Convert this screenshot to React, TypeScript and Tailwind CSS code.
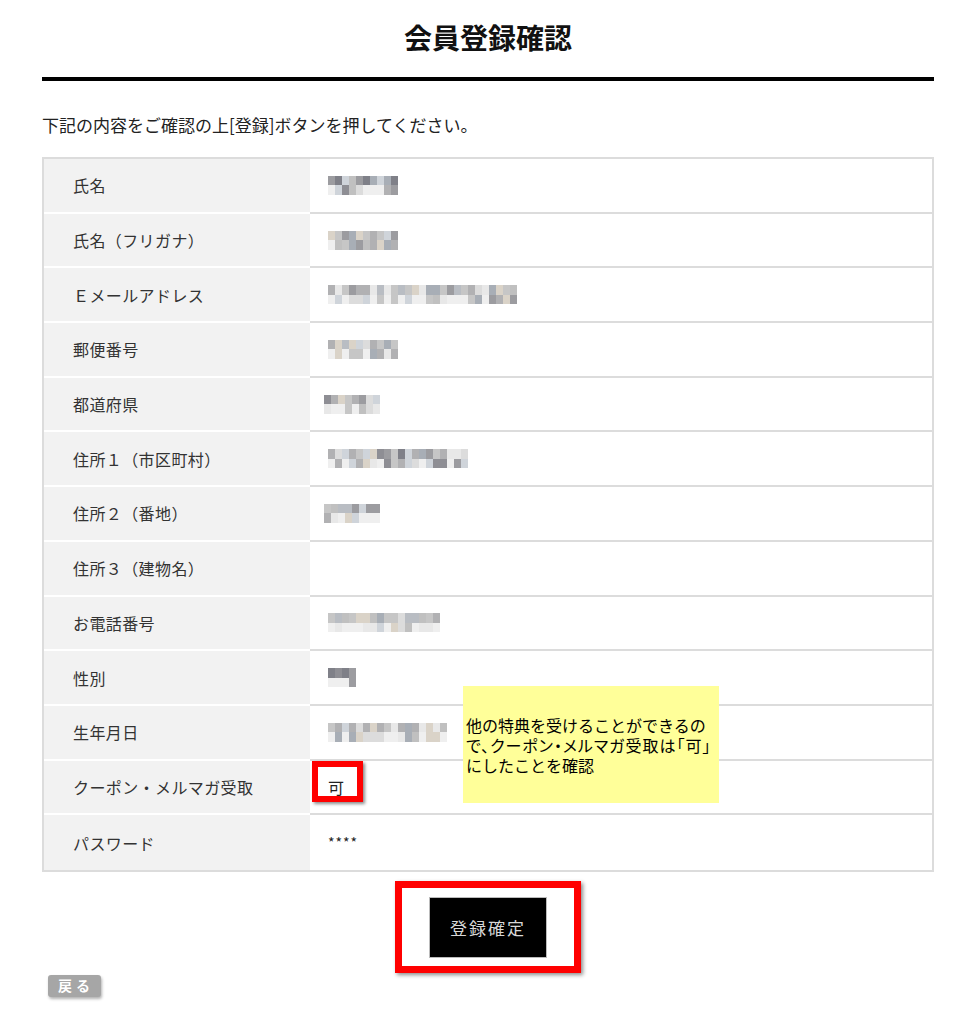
import React from "react";

const PALETTE = [
  "bg-[#dcdcdc]",
  "bg-[#c6c6c6]",
  "bg-[#b1b1b3]",
  "bg-[#9c9ca0]",
  "bg-[#e8e8e8]",
  "bg-[#cfd4da]",
  "bg-[#a8aeb6]",
  "bg-[#dad3c8]",
  "bg-[#8e8e94]",
  "bg-[#c0c0c0]",
  "bg-[#efefef]",
  "bg-[#b9bdc3]",
  "bg-[#f4f4f4]",
  "bg-[#7f8088]",
];

function Mosaic({ cells, seed, light }: { cells: number; seed: number; light?: boolean }) {
  const rows = [0, 1];
  let s = seed * 9301 + 49297;
  const next = () => {
    s = (s * 9301 + 49297) % 233280;
    return s / 233280;
  };
  return (
    <div className="flex flex-col">
      {rows.map((r) => (
        <div key={r} className="flex">
          {Array.from({ length: cells }).map((_, i) => {
            const v = next();
            let idx = Math.floor(v * PALETTE.length);
            if (light && (idx === 8 || idx === 13)) idx = 1;
            if (r === 0 && (idx === 10 || idx === 12)) idx = 2;
            if (r === 1 && v > 0.7) idx = 10;
            return <div key={i} className={`w-[7px] h-[9.5px] ${PALETTE[idx]}`} />;
          })}
        </div>
      ))}
    </div>
  );
}

type Row = { label: string; value: React.ReactNode };

export default function App() {
  const rows: Row[] = [
    { label: "氏名", value: <Mosaic cells={10} seed={3} /> },
    { label: "氏名（フリガナ）", value: <Mosaic cells={10} seed={7} light /> },
    { label: "Ｅメールアドレス", value: <Mosaic cells={27} seed={11} light /> },
    { label: "郵便番号", value: <Mosaic cells={10} seed={5} light /> },
    { label: "都道府県", value: <div className="-ml-[4px]"><Mosaic cells={8} seed={13} /></div> },
    { label: "住所１（市区町村）", value: <Mosaic cells={20} seed={17} /> },
    { label: "住所２（番地）", value: <div className="-ml-[4px]"><Mosaic cells={8} seed={19} light /></div> },
    { label: "住所３（建物名）", value: null },
    { label: "お電話番号", value: <Mosaic cells={16} seed={23} light /> },
    { label: "性別", value: <Mosaic cells={4} seed={29} /> },
    { label: "生年月日", value: <Mosaic cells={17} seed={31} light /> },
    {
      label: "クーポン・メルマガ受取",
      value: (
        <span className="relative inline-block text-[16px] text-[#222]">
          可
          <span className="absolute left-[-16px] top-[-14px] w-[51px] h-[41px] border-[6px] border-[#ff0000] shadow-[2px_2px_3px_rgba(0,0,0,0.45)]" />
        </span>
      ),
    },
    { label: "パスワード", value: <span className="text-[14px] text-[#222] tracking-[1px]">****</span> },
  ];

  return (
    <div className="w-[960px] min-h-[1024px] bg-white font-['Noto_Sans_CJK_JP','Noto_Sans',sans-serif] text-[#333]">
      <div className="ml-[42px] w-[892px] pt-[17px]">
        <h1 className="text-center text-[28px] leading-[40px] font-bold text-[#111]">会員登録確認</h1>
        <div className="mt-[20px] h-[4px] bg-black" />
        <p className="mt-[32px] text-[17px] leading-[24px] text-[#222]">
          下記の内容をご確認の上[登録]ボタンを押してください。
        </p>

        <div className="relative mt-[20px] border-2 border-[#dcdcdc]">
          {rows.map((row, i) => {
            const last = i === rows.length - 1;
            return (
              <div key={row.label} className="flex h-[54.7px]">
                <div
                  className={`w-[266px] shrink-0 bg-[#f2f2f2] pl-[29px] flex items-center text-[16px] tracking-[0.4px] text-[#333] ${
                    last ? "" : "border-b-2 border-white"
                  }`}
                >
                  {row.label}
                </div>
                <div
                  className={`flex-1 pl-[18px] flex items-center ${last ? "" : "border-b-2 border-[#dcdcdc]"}`}
                >
                  {row.value}
                </div>
              </div>
            );
          })}

          <div className="absolute left-[419px] top-[527px] w-[256px] h-[117px] bg-[#ffff99] flex flex-col justify-center pl-[3px] text-[16px] leading-[20px] text-black whitespace-nowrap">
            <div>他の特典を受けることができるの</div>
            <div className="[font-feature-settings:'palt'] tracking-[1px]">で、クーポン・メルマガ受取は「可」</div>
            <div>にしたことを確認</div>
          </div>
        </div>

        <div className="mt-[9px] flex justify-center">
          <div className="border-[7px] border-[#ff0000] pt-[9px] pb-[8px] px-[27px] shadow-[2px_2px_4px_rgba(0,0,0,0.45)]">
            <div className="w-[118px] h-[61px] bg-black border border-[#bbb] flex items-center justify-center text-[17px] tracking-[2px] text-[#d8d8d8]">
              登録確定
            </div>
          </div>
        </div>

        <div className="mt-[2px] ml-[6px]">
          <div className="w-[53px] h-[22px] rounded-[3px] bg-[#a6a6a6] flex items-center justify-center text-[14px] font-bold text-white tracking-[4px] pl-[3px] shadow-[1px_2px_3px_rgba(0,0,0,0.3)]">
            戻る
          </div>
        </div>
      </div>
    </div>
  );
}
